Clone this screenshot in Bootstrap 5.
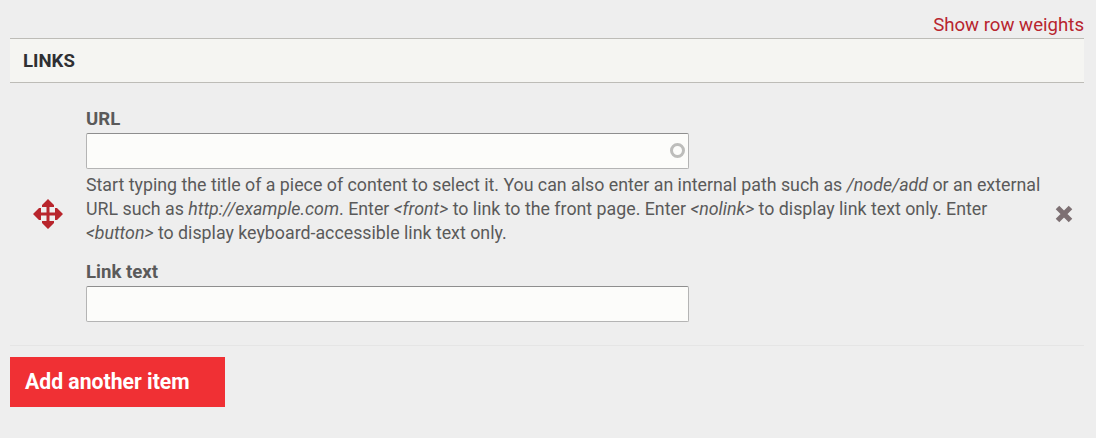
<!DOCTYPE html>
<html lang="en">
<head>
<meta charset="utf-8">
<title>Links</title>
<link href="https://cdn.jsdelivr.net/npm/bootstrap@5.3.0/dist/css/bootstrap.min.css" rel="stylesheet">
<style>
html,body{height:100%;}
body{background:#eee;font-family:Roboto,"Liberation Sans",sans-serif;font-size:16px;line-height:24px;color:#5a5a5a;overflow:hidden;}
.page-wrap{padding:13px 12px 0 10px;}
.weights-row{height:25px;line-height:25px;font-size:18.65px;}
.weights-link{color:#b8252e;text-decoration:none;}
.links-head{background:#f5f5f2;border-top:1px solid #bdbcb7;border-bottom:1px solid #bdbcb7;height:45px;padding:0 13px;color:#2f2f33;font-weight:700;font-size:18.6px;line-height:44px;}
.item-row{border-bottom:1px solid #e5e5e5;height:263px;}
.drag-cell{width:76px;padding-bottom:1px;}
.field-cell{width:955px;padding-top:24px;}
.field-label{font-weight:700;font-size:18.6px;line-height:24px;margin:0 0 2px;display:block;color:#5a5a5a;}
.field-input{width:603px;height:36px;background:#fcfcfa;border:1px solid #b4b4b4;border-top-color:#8e8e8e;border-radius:2px;padding:0 8px;display:block;}
.auto-wrap{width:603px;}
.auto-ring{right:4px;top:10px;width:15px;height:15px;border:3px solid #bdbdbb;border-radius:50%;}
.field-help{margin:4px 0 15px;line-height:24px;font-size:17.8px;}
.remove-cell{width:43px;padding-left:2px;}
.add-btn{margin-top:11px;width:215px;height:50px;background:#f03034;color:#fff;font-weight:700;font-size:21.2px;border:0;border-radius:0;text-align:left;padding:0 15px;}
.add-btn:hover{background:#f03034;color:#fff;}
</style>
</head>
<body>
<div class="page-wrap">
  <div class="weights-row text-end"><a class="weights-link" href="#">Show row weights</a></div>
  <div class="links-head">LINKS</div>
  <div class="item-row d-flex align-items-stretch">
    <div class="drag-cell d-flex align-items-center justify-content-center flex-shrink-0">
      <svg width="30" height="30" viewBox="0 0 30 30" aria-hidden="true"><path fill="#b8252c" d="M15 0 21 6 21 8 16.500 8 16.500 13.500 22 13.500 22 9 24 9 30 15 24 21 22 21 22 16.500 16.500 16.500 16.500 22 21 22 21 24 15 30 9 24 9 22 13.500 22 13.500 16.500 8 16.500 8 21 6 21 0 15 6 9 8 9 8 13.500 13.500 13.500 13.500 8 9 8 9 6Z"/></svg>
    </div>
    <div class="field-cell flex-shrink-0">
      <label class="field-label" for="url">URL</label>
      <div class="auto-wrap position-relative">
        <input id="url" class="field-input" type="text">
        <span class="auto-ring position-absolute"></span>
      </div>
      <div class="field-help">Start typing the title of a piece of content to select it. You can also enter an internal path such as <em>/node/add</em> or an external URL such as <em>http://example.com</em>. Enter <em>&lt;front&gt;</em> to link to the front page. Enter <em>&lt;nolink&gt;</em> to display link text only. Enter <em>&lt;button&gt;</em> to display keyboard-accessible link text only.</div>
      <label class="field-label" for="txt">Link text</label>
      <input id="txt" class="field-input" type="text">
    </div>
    <div class="remove-cell d-flex align-items-center justify-content-center flex-grow-1">
      <svg width="18" height="18" viewBox="0 0 18 18" aria-hidden="true"><path stroke="#7d7073" stroke-width="5" d="M2.500 2.500 15.500 15.500M15.500 2.500 2.500 15.500"/></svg>
    </div>
  </div>
  <button class="btn add-btn" type="button">Add another item</button>
</div>
<script src="https://cdn.jsdelivr.net/npm/bootstrap@5.3.0/dist/js/bootstrap.bundle.min.js"></script>
</body>
</html>
